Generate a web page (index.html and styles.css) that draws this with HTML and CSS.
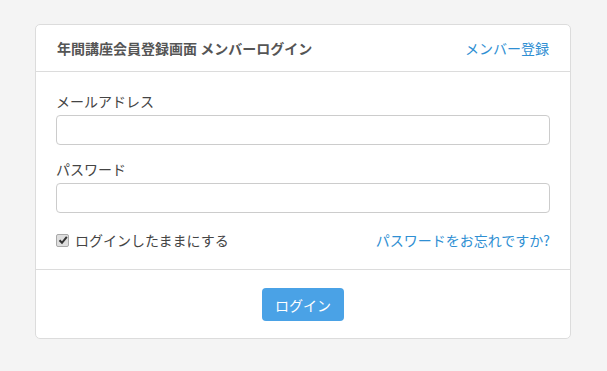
FILE: index.html
```html
<!DOCTYPE html>
<html lang="ja">
<head>
    <meta charset="UTF-8">
    <meta name="viewport" content="width=device-width, initial-scale=1.0">
    <title>メンバーログイン</title>
    <link rel="stylesheet" href="styles.css">
</head>
<body>
    <main class="container">
        <div class="panel">
            <div class="panel-heading">
                <h1>年間講座会員登録画面 メンバーログイン</h1>
                <a href="#" class="link">メンバー登録</a>
            </div>
            <form class="panel-body">
                <div class="form-group">
                    <label for="email">メールアドレス</label>
                    <input type="email" id="email" class="form-control">
                </div>
                <div class="form-group">
                    <label for="password">パスワード</label>
                    <input type="password" id="password" class="form-control">
                </div>
                <div class="form-row">
                    <label class="remember">
                        <span class="check">
                            <svg width="10" height="10" viewBox="0 0 10 10"><path d="M1.5 5.2 L4 7.8 L8.8 1.8" fill="none" stroke="#333" stroke-width="2"/></svg>
                        </span>
                        ログインしたままにする
                    </label>
                    <a href="#" class="link">パスワードをお忘れですか?</a>
                </div>
            </form>
            <div class="panel-footer">
                <button type="button" class="btn">ログイン</button>
            </div>
        </div>
    </main>
</body>
</html>
```

FILE: styles.css
```css
:root {
    --color-link: #2f8fd3;
    --color-btn: #4aa2e6;
    --color-border: #dcdcdc;
    --color-text: #444;
}
body { font-family: "Noto Sans CJK JP", "Noto Sans", sans-serif; margin: 0; background-color: #f4f4f4; color: var(--color-text); font-size: 14px; }
.container { padding: 24px 36px 0 35px; }
.panel { background-color: #fff; border: 1px solid var(--color-border); border-radius: 5px; }
.panel-heading { height: 46px; display: flex; align-items: center; justify-content: space-between; padding: 0 21px; border-bottom: 1px solid var(--color-border); }
.panel-heading h1 { margin: 0; font-size: 14px; font-weight: 700; color: #555; }
.link { color: var(--color-link); text-decoration: none; font-size: 14px; }
.panel-body { padding: 20px 20px 17px; }
.form-group { margin-bottom: 15px; }
.form-group label { display: block; line-height: 18px; margin-bottom: 5px; }
.form-control { display: block; box-sizing: border-box; width: 100%; height: 30px; border: 1px solid #ccc; border-radius: 4px; padding: 4px 10px; font-size: 14px; }
.form-row { display: flex; align-items: center; justify-content: space-between; height: 24px; }
.remember { display: flex; align-items: center; gap: 6px; }
.check { width: 11px; height: 11px; border: 1px solid #a9a9a9; border-radius: 2px; background-color: #dedede; display: flex; align-items: center; justify-content: center; }
.panel-footer { border-top: 1px solid var(--color-border); padding: 18px 0 17px; text-align: center; }
.btn { background-color: var(--color-btn); color: #fff; border: none; border-radius: 4px; height: 33px; padding: 0 13px; font-size: 14px; font-family: inherit; cursor: pointer; }
```
